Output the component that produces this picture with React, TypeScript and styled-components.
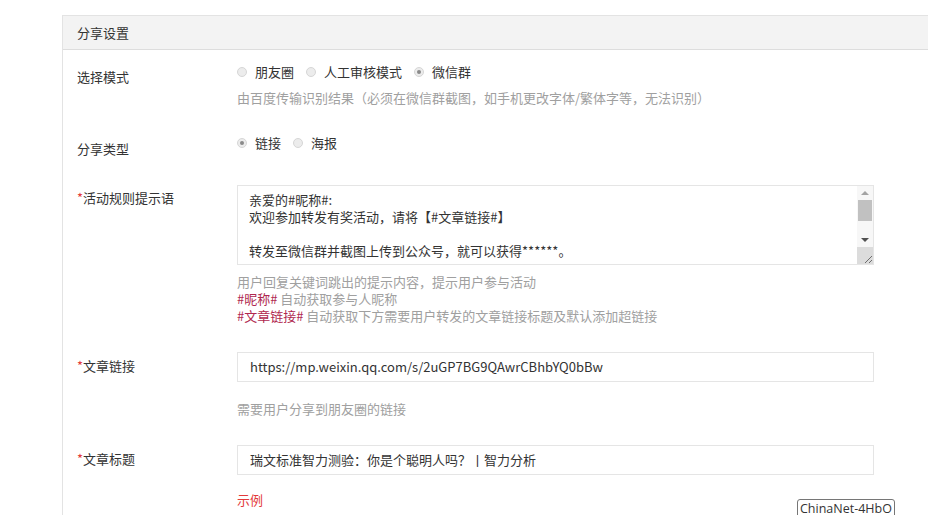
import React from "react";
import styled, { createGlobalStyle } from "styled-components";

const GlobalStyle = createGlobalStyle`
  html, body {
    margin: 0;
    padding: 0;
    background: #ffffff;
    overflow: hidden;
  }
  body {
    font-family: "Microsoft YaHei", "Noto Sans CJK SC", sans-serif;
    font-size: 13px;
    color: #333333;
  }
`;

const Page = styled.div`
  width: 928px;
  height: 515px;
  padding: 15px 0 0 62px;
  box-sizing: border-box;
  overflow: hidden;
  position: relative;
`;

const Panel = styled.div`
  width: 900px;
  border: 1px solid #e3e3e3;
  border-bottom: none;
  min-height: 520px;
`;

const PanelHeader = styled.div`
  height: 33px;
  line-height: 33px;
  padding: 0 14px;
  background: #f3f3f3;
  border-bottom: 1px solid #dddddd;
  color: #333333;
`;

const FormBody = styled.div`
  padding: 12px 14px 0 14px;
`;

const Row = styled.div<{ $gap?: number }>`
  display: flex;
  align-items: flex-start;
  margin-top: ${(p) => p.$gap ?? 0}px;
`;

const Label = styled.div<{ $pt: number }>`
  width: 160px;
  flex-shrink: 0;
  line-height: 20px;
  padding-top: ${(p) => p.$pt}px;
  color: #333333;
`;

const Star = styled.span`
  color: #e33b3b;
`;

const Control = styled.div`
  display: flex;
  flex-direction: column;
  width: 637px;
`;

const RadioGroup = styled.div`
  display: flex;
  align-items: center;
  height: 20px;
`;

const RadioItem = styled.label`
  display: inline-flex;
  align-items: center;
  margin-right: 12px;
  color: #333333;
  line-height: 20px;
`;

const RadioDot = styled.span<{ $checked?: boolean }>`
  width: 8px;
  height: 8px;
  border-radius: 50%;
  border: 1px solid #d6d6d6;
  background: #ececec;
  margin: 0 8px 0 0;
  display: inline-flex;
  align-items: center;
  justify-content: center;
  box-sizing: content-box;
  &::after {
    content: "";
    width: 4px;
    height: 4px;
    border-radius: 50%;
    background: ${(p) => (p.$checked ? "#8a8a8a" : "transparent")};
  }
`;

const Help = styled.div<{ $mt: number }>`
  margin-top: ${(p) => p.$mt}px;
  line-height: 20px;
  color: #a0a0a0;
`;

const HintBlock = styled.div`
  margin-top: 8px;
  line-height: 17px;
  color: #a0a0a0;
`;

const Tag = styled.span`
  color: #b0284f;
`;

const TextAreaBox = styled.div`
  display: flex;
  height: 80px;
  border: 1px solid #e5e5e5;
  box-sizing: border-box;
`;

const TextArea = styled.div`
  flex: 1;
  padding: 5px 11px;
  line-height: 17px;
  color: #333333;
  white-space: pre;
  overflow: hidden;
`;

const ScrollBar = styled.div`
  width: 16px;
  display: flex;
  flex-direction: column;
  align-items: center;
  background: #f7f7f7;
`;

const Arrow = styled.div<{ $up?: boolean }>`
  height: 14px;
  width: 16px;
  display: flex;
  align-items: center;
  justify-content: center;
  &::after {
    content: "";
    border-left: 4px solid transparent;
    border-right: 4px solid transparent;
    ${(p) =>
      p.$up
        ? "border-bottom: 4px solid #a3a3a3;"
        : "border-top: 4px solid #505050;"}
  }
`;

const Thumb = styled.div`
  width: 14px;
  height: 21px;
  background: #c1c1c1;
`;

const Track = styled.div`
  flex: 1;
`;

const Grip = styled.div`
  width: 16px;
  height: 17px;
  background: #dcdcdc;
  display: flex;
  align-items: flex-end;
  justify-content: flex-end;
`;

const Input = styled.div`
  height: 30px;
  line-height: 28px;
  border: 1px solid #e5e5e5;
  box-sizing: border-box;
  padding: 0 12px;
  color: #333333;
  white-space: nowrap;
`;

const Example = styled.div`
  margin-top: 15px;
  line-height: 20px;
  color: #e33b3b;
`;

const NetTip = styled.div`
  position: absolute;
  left: 797px;
  top: 499px;
  padding: 0 2px;
  height: 20px;
  line-height: 18px;
  border: 1px solid #767676;
  border-radius: 3px;
  background: #ffffff;
  color: #333333;
  font-family: "Segoe UI", "Open Sans", "Noto Sans", sans-serif;
  font-size: 12.5px;
  box-sizing: border-box;
`;

const Radio = ({ label, checked }: { label: string; checked?: boolean }) => (
  <RadioItem>
    <RadioDot $checked={checked} />
    {label}
  </RadioItem>
);

const ruleText = "亲爱的#昵称#:\n欢迎参加转发有奖活动，请将【#文章链接#】\n\n转发至微信群并截图上传到公众号，就可以获得******。";

export default function App() {
  return (
    <Page>
      <GlobalStyle />
      <Panel>
        <PanelHeader>分享设置</PanelHeader>
        <FormBody>
          <Row>
            <Label $pt={5}>选择模式</Label>
            <Control>
              <RadioGroup>
                <Radio label="朋友圈" />
                <Radio label="人工审核模式" />
                <Radio label="微信群" checked />
              </RadioGroup>
              <Help $mt={6}>由百度传输识别结果（必须在微信群截图，如手机更改字体/繁体字等，无法识别）</Help>
            </Control>
          </Row>

          <Row $gap={25}>
            <Label $pt={6}>分享类型</Label>
            <Control>
              <RadioGroup>
                <Radio label="链接" checked />
                <Radio label="海报" />
              </RadioGroup>
            </Control>
          </Row>

          <Row $gap={26}>
            <Label $pt={3}>
              <Star>*</Star>活动规则提示语
            </Label>
            <Control>
              <TextAreaBox>
                <TextArea>{ruleText}</TextArea>
                <ScrollBar>
                  <Arrow $up />
                  <Thumb />
                  <Track />
                  <Arrow />
                  <Grip>
                    <svg width="10" height="10" viewBox="0 0 10 10">
                      <path d="M9 2 L2 9 M9 6 L6 9" stroke="#6e6e6e" strokeWidth="1" />
                    </svg>
                  </Grip>
                </ScrollBar>
              </TextAreaBox>
              <HintBlock>
                <div>用户回复关键词跳出的提示内容，提示用户参与活动</div>
                <div>
                  <Tag>#昵称#</Tag> 自动获取参与人昵称
                </div>
                <div>
                  <Tag>#文章链接#</Tag> 自动获取下方需要用户转发的文章链接标题及默认添加超链接
                </div>
              </HintBlock>
            </Control>
          </Row>

          <Row $gap={28}>
            <Label $pt={4}>
              <Star>*</Star>文章链接
            </Label>
            <Control>
              <Input>https://mp.weixin.qq.com/s/2uGP7BG9QAwrCBhbYQ0bBw</Input>
              <Help $mt={17}>需要用户分享到朋友圈的链接</Help>
            </Control>
          </Row>

          <Row $gap={26}>
            <Label $pt={4}>
              <Star>*</Star>文章标题
            </Label>
            <Control>
              <Input>瑞文标准智力测验：你是个聪明人吗？丨智力分析</Input>
              <Example>示例</Example>
            </Control>
          </Row>
        </FormBody>
      </Panel>
      <NetTip>ChinaNet-4HbO</NetTip>
    </Page>
  );
}
